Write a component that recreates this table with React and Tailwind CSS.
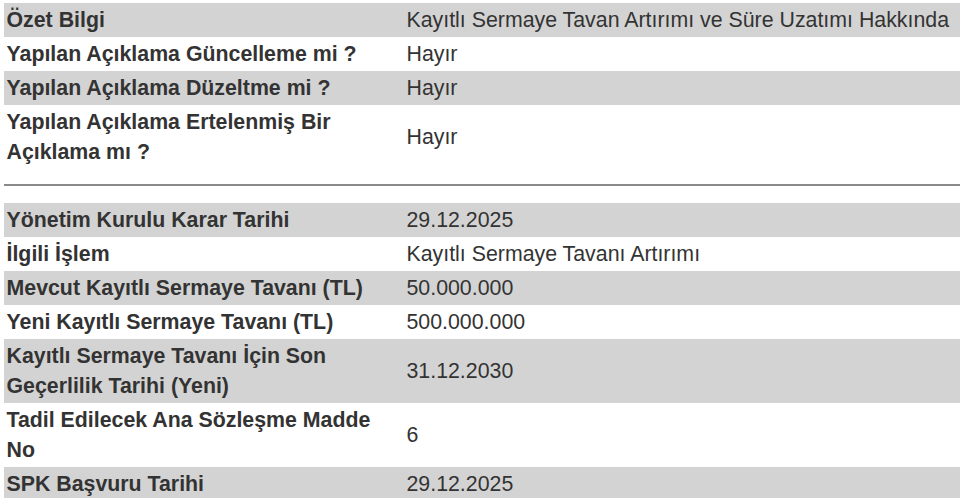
const topRows = [
  ['Özet Bilgi', 'Kayıtlı Sermaye Tavan Artırımı ve Süre Uzatımı Hakkında'],
  ['Yapılan Açıklama Güncelleme mi ?', 'Hayır'],
  ['Yapılan Açıklama Düzeltme mi ?', 'Hayır'],
  ['Yapılan Açıklama Ertelenmiş Bir Açıklama mı ?', 'Hayır'],
];

const bottomRows = [
  ['Yönetim Kurulu Karar Tarihi', '29.12.2025'],
  ['İlgili İşlem', 'Kayıtlı Sermaye Tavanı Artırımı'],
  ['Mevcut Kayıtlı Sermaye Tavanı (TL)', '50.000.000'],
  ['Yeni Kayıtlı Sermaye Tavanı (TL)', '500.000.000'],
  ['Kayıtlı Sermaye Tavanı İçin Son Geçerlilik Tarihi (Yeni)', '31.12.2030'],
  ['Tadil Edilecek Ana Sözleşme Madde No', '6'],
  ['SPK Başvuru Tarihi', '29.12.2025'],
];

const InfoTable = ({ rows }) => (
  <div className="flex flex-col">
    {rows.map(([label, value], i) => (
      <div
        key={label}
        className={`grid grid-cols-[400px_1fr] items-center py-[2px] ${i % 2 === 0 ? 'bg-[#d3d3d3]' : 'bg-white'}`}
      >
        <div className="pl-[3px] pr-[2px] font-bold">{label}</div>
        <div className="pl-[3px]">{value}</div>
      </div>
    ))}
  </div>
);

export default function App() {
  return (
    <div
      className="w-[960px] h-[498px] overflow-hidden bg-white pt-[3px] pl-[3.5px] text-[21.33px] leading-[30px] text-[#333333]"
      style={{ fontFamily: '"Liberation Sans", Arial, sans-serif' }}
    >
      <InfoTable rows={topRows} />
      <hr className="mt-[15px] mb-[17px] border-0 border-t-2 border-[#8a8a8a]" />
      <InfoTable rows={bottomRows} />
    </div>
  );
}
